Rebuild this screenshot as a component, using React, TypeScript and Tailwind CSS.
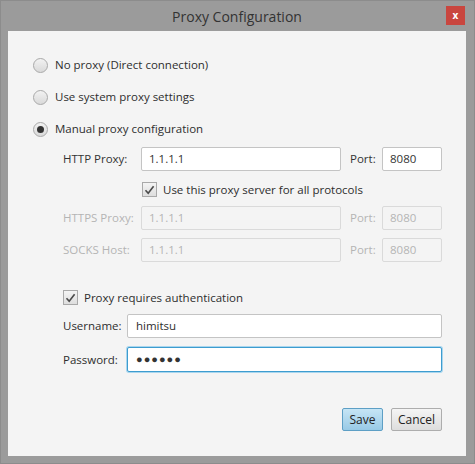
import React from "react";

type RadioProps = { label: string; checked?: boolean };

function Radio({ label, checked }: RadioProps) {
  return (
    <div className="flex h-[32px] items-center">
      <div className="flex h-[15px] w-[15px] items-center justify-center rounded-full border border-[#a9a9a9] bg-gradient-to-b from-[#f2f2f2] to-[#d9d9d9]">
        {checked && <div className="h-[7px] w-[7px] rounded-full bg-[#333]" />}
      </div>
      <span className="ml-[7px]">{label}</span>
    </div>
  );
}

function Check({ label }: { label: string }) {
  return (
    <div className="flex h-[15px] items-center">
      <div className="flex h-[15px] w-[15px] items-center justify-center border border-[#a9a9a9] bg-gradient-to-b from-[#f4f4f4] to-[#dedede]">
        <svg width="11" height="10" viewBox="0 0 11 10">
          <path d="M1.5 5.2 L4.2 8.3 L9.6 1.2" fill="none" stroke="#4a4a4a" strokeWidth="1.6" />
        </svg>
      </div>
      <span className="ml-[6px]">{label}</span>
    </div>
  );
}

type ProxyRowProps = { label: string; host: string; port: string; disabled?: boolean };

function ProxyRow({ label, host, port, disabled }: ProxyRowProps) {
  const box = disabled
    ? "border-[#dadada] bg-[#f4f4f4] text-[#b4b4b4]"
    : "border-[#c4c4c4] bg-white text-[#333]";
  return (
    <div className={"flex h-[24px] items-center " + (disabled ? "text-[#b4b4b4]" : "text-[#333]")}>
      <span className="w-[78px]">{label}</span>
      <div className={"flex h-[24px] w-[200px] items-center rounded-[2px] border px-[7px] " + box}>{host}</div>
      <span className="ml-[9px] w-[32px]">Port:</span>
      <div className={"flex h-[24px] w-[60px] items-center rounded-[2px] border px-[7px] " + box}>{port}</div>
    </div>
  );
}

export default function App() {
  return (
    <div
      className="flex h-[464px] w-[475px] flex-col border border-[#8c8c8c] bg-[#9b9b9b] pb-[7px] pl-[7px] pr-[8px] text-[11.5px] text-[#2e2e2e]"
      style={{ fontFamily: '"Open Sans", "Noto Sans", sans-serif' }}
    >
      <div className="relative flex h-[30px] items-center justify-center">
        <span className="text-[14px] text-[#333]">Proxy Configuration</span>
        <div className="absolute right-[1px] top-[5px] flex h-[19px] w-[19px] items-center justify-center bg-[#c9463f] text-[10px] font-bold text-white">
          x
        </div>
      </div>
      <div className="flex flex-1 flex-col bg-[#f4f4f4] pl-[25px] pr-[24px] pt-[18px]">
        <Radio label="No proxy (Direct connection)" />
        <Radio label="Use system proxy settings" />
        <Radio label="Manual proxy configuration" checked />
        <div className="ml-[30px] flex flex-col">
          <div className="mt-[2px]">
            <ProxyRow label="HTTP Proxy:" host="1.1.1.1" port="8080" />
          </div>
          <div className="mt-[11px] pl-[79px]">
            <Check label="Use this proxy server for all protocols" />
          </div>
          <div className="mt-[9px]">
            <ProxyRow label="HTTPS Proxy:" host="1.1.1.1" port="8080" disabled />
          </div>
          <div className="mt-[8px]">
            <ProxyRow label="SOCKS Host:" host="1.1.1.1" port="8080" disabled />
          </div>
          <div className="mt-[28px]">
            <Check label="Proxy requires authentication" />
          </div>
          <div className="mt-[9px] flex h-[24px] items-center">
            <span className="w-[64px]">Username:</span>
            <div className="flex h-[24px] flex-1 items-center rounded-[2px] border border-[#c4c4c4] bg-white px-[8px]">himitsu</div>
          </div>
          <div className="mt-[9px] flex h-[25px] items-center">
            <span className="w-[64px]">Password:</span>
            <div className="flex h-[25px] flex-1 items-center rounded-[2px] border border-[#3d9ccf] bg-white px-[8px] ring-1 ring-[#a9d6ee]">
              <span className="text-[11px] tracking-[1px] text-[#333]">●●●●●●</span>
            </div>
          </div>
        </div>
        <div className="mt-[36px] flex justify-end gap-[8px]">
          <button className="h-[23px] w-[41px] rounded-[2px] border border-[#5d9fc5] bg-gradient-to-b from-[#c6e5f5] to-[#98cae6] text-[12px] text-[#222]">
            Save
          </button>
          <button className="h-[23px] w-[51px] rounded-[2px] border border-[#adadad] bg-gradient-to-b from-[#f5f5f5] to-[#dddddd] text-[12px] text-[#222]">
            Cancel
          </button>
        </div>
      </div>
    </div>
  );
}
